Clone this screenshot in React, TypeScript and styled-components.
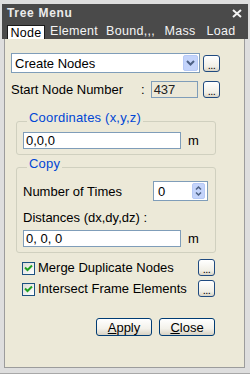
import React from 'react';
import styled, { createGlobalStyle } from 'styled-components';

const GlobalStyle = createGlobalStyle`
  html, body {
    margin: 0;
    padding: 0;
    background: #d8d8d8;
  }
  body {
    font-family: "Liberation Sans", Arial, sans-serif;
    font-size: 12px;
    color: #000;
  }
`;

const Window = styled.div`
  width: 250px;
  height: 374px;
  box-sizing: border-box;
  background: #dedede;
  border-bottom: 1px solid #a8a8a8;
  padding: 4px 2px 0;
  display: flex;
  flex-direction: column;
`;

const TitleBar = styled.div`
  height: 18px;
  background: #4a4a4a;
  color: #ececec;
  display: flex;
  align-items: center;
  justify-content: space-between;
  padding: 0 6px 0 5px;
  font-weight: bold;
  font-size: 12px;
  letter-spacing: 0.7px;
`;

const TabBar = styled.div`
  height: 17px;
  background: #4a4a4a;
  display: flex;
  align-items: flex-end;
  padding-left: 5px;
`;

const Tab = styled.div<{ $w: number; $active?: boolean }>`
  width: ${(p) => p.$w}px;
  box-sizing: border-box;
  height: ${(p) => (p.$active ? 14 : 16)}px;
  display: flex;
  align-items: center;
  justify-content: center;
  color: ${(p) => (p.$active ? '#000' : '#f4f4f4')};
  background: ${(p) => (p.$active ? '#fff' : 'transparent')};
  border: ${(p) => (p.$active ? '1px solid #1a1a1a' : 'none')};
  border-bottom: none;
  font-size: 12.5px;
  letter-spacing: 0.3px;
`;

const Panel = styled.div`
  flex: 1;
  margin: 0 3px 5px 2px;
  background: #ece9d8;
  border: 1px solid #9c9c9c;
  border-top: none;
  padding: 14px 0 0 6px;
  display: flex;
  flex-direction: column;
`;

const Row = styled.div<{ $mt?: number }>`
  display: flex;
  align-items: center;
  width: 209px;
  margin-top: ${(p) => p.$mt ?? 0}px;
`;

const Combo = styled.div`
  width: 189px;
  height: 20px;
  box-sizing: border-box;
  border: 1px solid #7f9db9;
  background: #fff;
  display: flex;
  align-items: center;
  justify-content: space-between;
  padding: 1px 1px 1px 3px;
  font-size: 13px;
`;

const ComboArrow = styled.div`
  width: 15px;
  height: 16px;
  box-sizing: border-box;
  background: #c4d4fb;
  border: 1px solid #b6c9f6;
  border-radius: 2px;
  display: flex;
  align-items: center;
  justify-content: center;
`;

const DotsButton = styled.div`
  width: 17px;
  height: 17px;
  box-sizing: border-box;
  margin-left: auto;
  border: 1px solid #1f4a80;
  border-radius: 3px;
  background: linear-gradient(#ffffff, #f1efe6 70%, #d9d4c6);
  display: flex;
  align-items: flex-end;
  justify-content: center;
  font-size: 11px;
  line-height: 12px;
  letter-spacing: -0.5px;
`;

const Label = styled.span<{ $w?: number }>`
  display: inline-block;
  width: ${(p) => (p.$w ? `${p.$w}px` : 'auto')};
  font-size: 13px;
  white-space: nowrap;
`;

const BlockLabel = styled(Label)<{ $mt: number }>`
  display: block;
  margin-top: ${(p) => p.$mt}px;
`;

const ReadOnlyField = styled.div`
  width: 47px;
  height: 17px;
  box-sizing: border-box;
  margin-left: 6px;
  border: 1px solid #7f9db9;
  background: #ebe8d8;
  padding-left: 2px;
  font-size: 13px;
  line-height: 15px;
  color: #222;
`;

const Group = styled.fieldset<{ $mt: number }>`
  margin: ${(p) => p.$mt}px 0 0 5px;
  width: 200px;
  box-sizing: border-box;
  border: 1px solid #d0d0bf;
  border-radius: 3px;
  padding: 1px 6px 5px 6px;
  min-width: 0;
`;

const Legend = styled.legend`
  padding: 0 2px 6px;
  margin-left: 4px;
  color: #0046d5;
  font-size: 13px;
  line-height: 14px;
  letter-spacing: 0.2px;
`;

const TextField = styled.div`
  width: 158px;
  height: 17px;
  box-sizing: border-box;
  border: 1px solid #7f9db9;
  background: #fff;
  padding-left: 2px;
  font-size: 13px;
  line-height: 15px;
`;

const Unit = styled.span`
  margin-left: 7px;
  font-size: 13px;
`;

const Spin = styled.div`
  width: 55px;
  height: 20px;
  box-sizing: border-box;
  margin-left: auto;
  margin-right: 1px;
  border: 1px solid #7f9db9;
  background: #fff;
  display: flex;
  align-items: center;
  justify-content: space-between;
  padding: 1px 2px 1px 4px;
  font-size: 13px;
`;

const SpinButtons = styled.div`
  width: 13px;
  height: 16px;
  box-sizing: border-box;
  background: #c4d4fb;
  border: 1px solid #b6c9f6;
  border-radius: 2px;
  display: flex;
  align-items: center;
  justify-content: center;
`;

const CheckRow = styled.div<{ $mt: number }>`
  display: flex;
  align-items: center;
  width: 204px;
  margin-top: ${(p) => p.$mt}px;
`;

const CheckBox = styled.div`
  width: 13px;
  height: 13px;
  box-sizing: border-box;
  margin: 1px 3px 0 11px;
  border: 1px solid #1c5180;
  background: linear-gradient(135deg, #dcdcd7, #ffffff);
  display: flex;
  align-items: center;
  justify-content: center;
`;

const ButtonRow = styled.div`
  display: flex;
  justify-content: flex-end;
  gap: 7px;
  width: 204px;
  margin-top: 21px;
`;

const PushButton = styled.div`
  width: 56px;
  height: 18px;
  box-sizing: border-box;
  border: 1px solid #003c74;
  border-radius: 3px;
  background: linear-gradient(#ffffff, #f3f1ea 60%, #d8d2c3);
  display: flex;
  align-items: center;
  justify-content: center;
  font-size: 13px;
  u {
    text-decoration: underline;
  }
`;

const Chevron = () => (
  <svg width="9" height="6" viewBox="0 0 9 6">
    <path d="M1 1 L4.5 4.5 L8 1" fill="none" stroke="#4d6185" strokeWidth="2" />
  </svg>
);

const Check = () => (
  <svg width="9" height="8" viewBox="0 0 9 8">
    <path d="M1 3.5 L3.5 6 L8 1.5" fill="none" stroke="#21a121" strokeWidth="2" />
  </svg>
);

const SpinArrows = () => (
  <svg width="7" height="12" viewBox="0 0 7 12">
    <path d="M1 4.5 L3.5 2 L6 4.5" fill="none" stroke="#4d6185" strokeWidth="1.5" />
    <path d="M1 7.5 L3.5 10 L6 7.5" fill="none" stroke="#4d6185" strokeWidth="1.5" />
  </svg>
);

const CloseIcon = () => (
  <svg width="10" height="9" viewBox="0 0 10 9">
    <path d="M1 1 L9 8 M9 1 L1 8" stroke="#f4f4f4" strokeWidth="2" />
  </svg>
);

const tabs = [
  { name: 'Node', w: 38 },
  { name: 'Element', w: 58 },
  { name: 'Bound,,,', w: 55 },
  { name: 'Mass', w: 44 },
  { name: 'Load', w: 38 },
];

export function App() {
  return (
    <>
      <GlobalStyle />
      <Window>
        <TitleBar>
          <span>Tree Menu</span>
          <CloseIcon />
        </TitleBar>
        <TabBar>
          {tabs.map((t, i) => (
            <Tab key={t.name} $w={t.w} $active={i === 0}>
              {t.name}
            </Tab>
          ))}
        </TabBar>
        <Panel>
          <Row>
            <Combo>
              <span>Create Nodes</span>
              <ComboArrow>
                <Chevron />
              </ComboArrow>
            </Combo>
            <DotsButton>...</DotsButton>
          </Row>
          <Row $mt={8}>
            <Label $w={130}>Start Node Number</Label>
            <Label>:</Label>
            <ReadOnlyField>437</ReadOnlyField>
            <DotsButton>...</DotsButton>
          </Row>

          <Group $mt={13}>
            <Legend>Coordinates (x,y,z)</Legend>
            <Row>
              <TextField>0,0,0</TextField>
              <Unit>m</Unit>
            </Row>
          </Group>

          <Group $mt={2}>
            <Legend>Copy</Legend>
            <Row $mt={3} style={{ width: 'auto' }}>
              <Label>Number of Times</Label>
              <Spin>
                <span>0</span>
                <SpinButtons>
                  <SpinArrows />
                </SpinButtons>
              </Spin>
            </Row>
            <BlockLabel $mt={9}>Distances (dx,dy,dz) :</BlockLabel>
            <Row $mt={5}>
              <TextField>0, 0, 0</TextField>
              <Unit>m</Unit>
            </Row>
          </Group>

          <CheckRow $mt={6}>
            <CheckBox>
              <Check />
            </CheckBox>
            <Label>Merge Duplicate Nodes</Label>
            <DotsButton>...</DotsButton>
          </CheckRow>
          <CheckRow $mt={4}>
            <CheckBox>
              <Check />
            </CheckBox>
            <Label>Intersect Frame Elements</Label>
            <DotsButton>...</DotsButton>
          </CheckRow>

          <ButtonRow>
            <PushButton>
              <u>A</u>pply
            </PushButton>
            <PushButton>
              <u>C</u>lose
            </PushButton>
          </ButtonRow>
        </Panel>
      </Window>
    </>
  );
}

export default App;
